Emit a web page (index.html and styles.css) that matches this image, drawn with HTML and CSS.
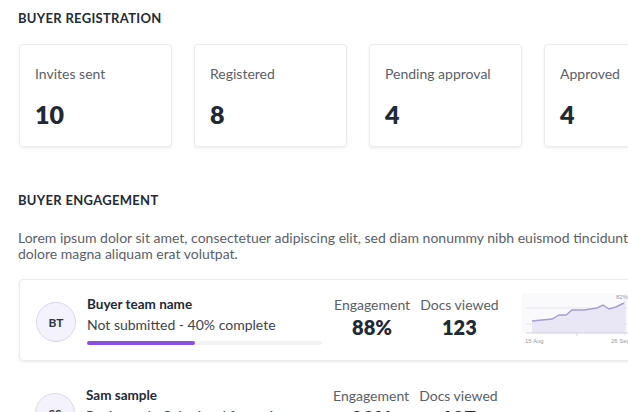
FILE: index.html
```html
<!DOCTYPE html>
<html lang="en">

<head>
  <meta charset="UTF-8">
  <meta name="viewport" content="width=device-width, initial-scale=1.0">
  <title>Buyer overview</title>
  <link rel="stylesheet" href="styles.css">
</head>

<body>
  <div class="page">
    <h2 class="section-title">Buyer registration</h2>
    <div class="stats">
      <div class="stat-card">
        <div class="stat-label">Invites sent</div>
        <div class="stat-value">10</div>
      </div>
      <div class="stat-card">
        <div class="stat-label">Registered</div>
        <div class="stat-value">8</div>
      </div>
      <div class="stat-card">
        <div class="stat-label">Pending approval</div>
        <div class="stat-value">4</div>
      </div>
      <div class="stat-card">
        <div class="stat-label">Approved</div>
        <div class="stat-value">4</div>
      </div>
    </div>

    <h2 class="section-title engagement-title">Buyer engagement</h2>
    <p class="intro">Lorem ipsum dolor sit amet, consectetuer adipiscing elit, sed diam nonummy nibh euismod tincidunt ut laoreet
      dolore magna aliquam erat volutpat.</p>

    <!-- buyer rows -->
    <div class="buyer-row card">
      <div class="avatar">BT</div>
      <div class="buyer-info">
        <div class="buyer-name">Buyer team name</div>
        <div class="buyer-status">Not submitted - 40% complete</div>
        <div class="progress"><div class="progress-fill" style="width: 46%"></div></div>
      </div>
      <div class="metric metric-engagement">
        <div class="metric-label">Engagement</div>
        <div class="metric-value">88%</div>
      </div>
      <div class="metric">
        <div class="metric-label">Docs viewed</div>
        <div class="metric-value">123</div>
      </div>
      <div class="chart">
        <svg width="106" height="58" viewBox="0 0 106 58">
          <rect x="0" y="3" width="106" height="40" fill="#fafafd"/>
          <line x1="4" y1="18" x2="106" y2="18" stroke="#e6e4f0" stroke-width="1"/>
          <line x1="4" y1="34" x2="106" y2="34" stroke="#e6e4f0" stroke-width="1"/>
          <path d="M10 31 L20 30 L30 29 L37 25 L44 25 L50 20 L62 20 L75 18 L81 15 L87 19 L94 17 L102 13 L102 43 L10 43 Z" fill="#e9e6f6"/>
          <path d="M10 31 L20 30 L30 29 L37 25 L44 25 L50 20 L62 20 L75 18 L81 15 L87 19 L94 17 L102 13" fill="none" stroke="#a59fd0" stroke-width="1.4"/>
          <line x1="4" y1="43" x2="106" y2="43" stroke="#d6d4e0" stroke-width="1"/>
          <line x1="103" y1="10" x2="103" y2="45" stroke="#dcdae4" stroke-width="1"/>
          <line x1="55" y1="43" x2="55" y2="46" stroke="#d6d4e0" stroke-width="1"/>
          <text x="3" y="53" class="chart-text">15 Aug</text>
          <text x="89" y="53" class="chart-text">26 Sep</text>
          <text x="94" y="9" class="chart-text">82%</text>
        </svg>
      </div>
    </div>

    <div class="buyer-row">
      <div class="avatar">SS</div>
      <div class="buyer-info">
        <div class="buyer-name">Sam sample</div>
        <div class="buyer-status">Registered - Submitted for review</div>
      </div>
      <div class="metric metric-engagement">
        <div class="metric-label">Engagement</div>
        <div class="metric-value">90%</div>
      </div>
      <div class="metric">
        <div class="metric-label">Docs viewed</div>
        <div class="metric-value">107</div>
      </div>
    </div>
  </div>
</body>

</html>
```

FILE: styles.css
```css
body {
  margin: 0;
  font-family: Lato, "Open Sans", Arial, sans-serif;
  color: #2b3440;
  background: #fff;
  overflow: hidden;
}

.page {
  width: 760px;
  padding: 10px 0 0 18px;
}

.section-title {
  margin: 0;
  font-size: 13px;
  font-weight: 700;
  letter-spacing: 0.3px;
  text-transform: uppercase;
  color: #232b36;
}

.stats {
  display: flex;
  gap: 22px;
  margin-top: 18px;
  padding-left: 1px;
}

.stat-card {
  width: 153px;
  height: 103px;
  box-sizing: border-box;
  padding: 20px 15px 0;
  border: 1px solid #ececec;
  border-radius: 4px;
  box-shadow: 0 1px 3px rgba(0, 0, 0, 0.08);
}

.stat-label {
  font-size: 14px;
  color: #5b6068;
}

.stat-value {
  margin-top: 17px;
  font-size: 25px;
  font-weight: 800;
  color: #1f2a36;
}

.engagement-title {
  margin-top: 45px;
}

.intro {
  margin: 22px 0 0;
  width: 680px;
  font-size: 14px;
  line-height: 16px;
  color: #5b6068;
}

.buyer-row {
  display: flex;
  align-items: flex-start;
  width: 660px;
  box-sizing: border-box;
  padding: 16px 0 0 16px;
  margin-left: 1px;
}

.card {
  margin-top: 17px;
  height: 82px;
  border: 1px solid #ececec;
  border-radius: 4px;
  box-shadow: 0 1px 3px rgba(0, 0, 0, 0.08);
}

.buyer-row + .buyer-row {
  margin-top: 10px;
}

.avatar {
  flex: none;
  width: 38px;
  height: 38px;
  margin-top: 6px;
  border: 1px solid #ddd7ee;
  border-radius: 50%;
  background: #f4f2fa;
  display: flex;
  align-items: center;
  justify-content: center;
  font-size: 12px;
  font-weight: 700;
  color: #2b3440;
}

.buyer-info {
  width: 235px;
  margin-left: 11px;
}

.buyer-name {
  font-size: 13.5px;
  font-weight: 700;
  color: #1f2a36;
}

.buyer-status {
  margin-top: 4px;
  font-size: 14px;
  color: #3c434c;
}

.progress {
  margin-top: 8px;
  height: 4px;
  border-radius: 2px;
  background: #f2f2f4;
}

.progress-fill {
  height: 4px;
  border-radius: 2px;
  background: #8b4fe0;
}

.metric {
  text-align: center;
  margin-left: 10px;
}

.metric-engagement {
  margin-left: 12px;
}

.metric-label {
  font-size: 14px;
  color: #5b6068;
}

.metric-value {
  margin-top: 2px;
  font-size: 20px;
  font-weight: 800;
  color: #1f2a36;
}

.chart {
  margin: -6px 0 0 23px;
}

.chart-text {
  font-family: "Liberation Sans", Arial, sans-serif;
  font-size: 6px;
  fill: #9a9aa6;
}
```
